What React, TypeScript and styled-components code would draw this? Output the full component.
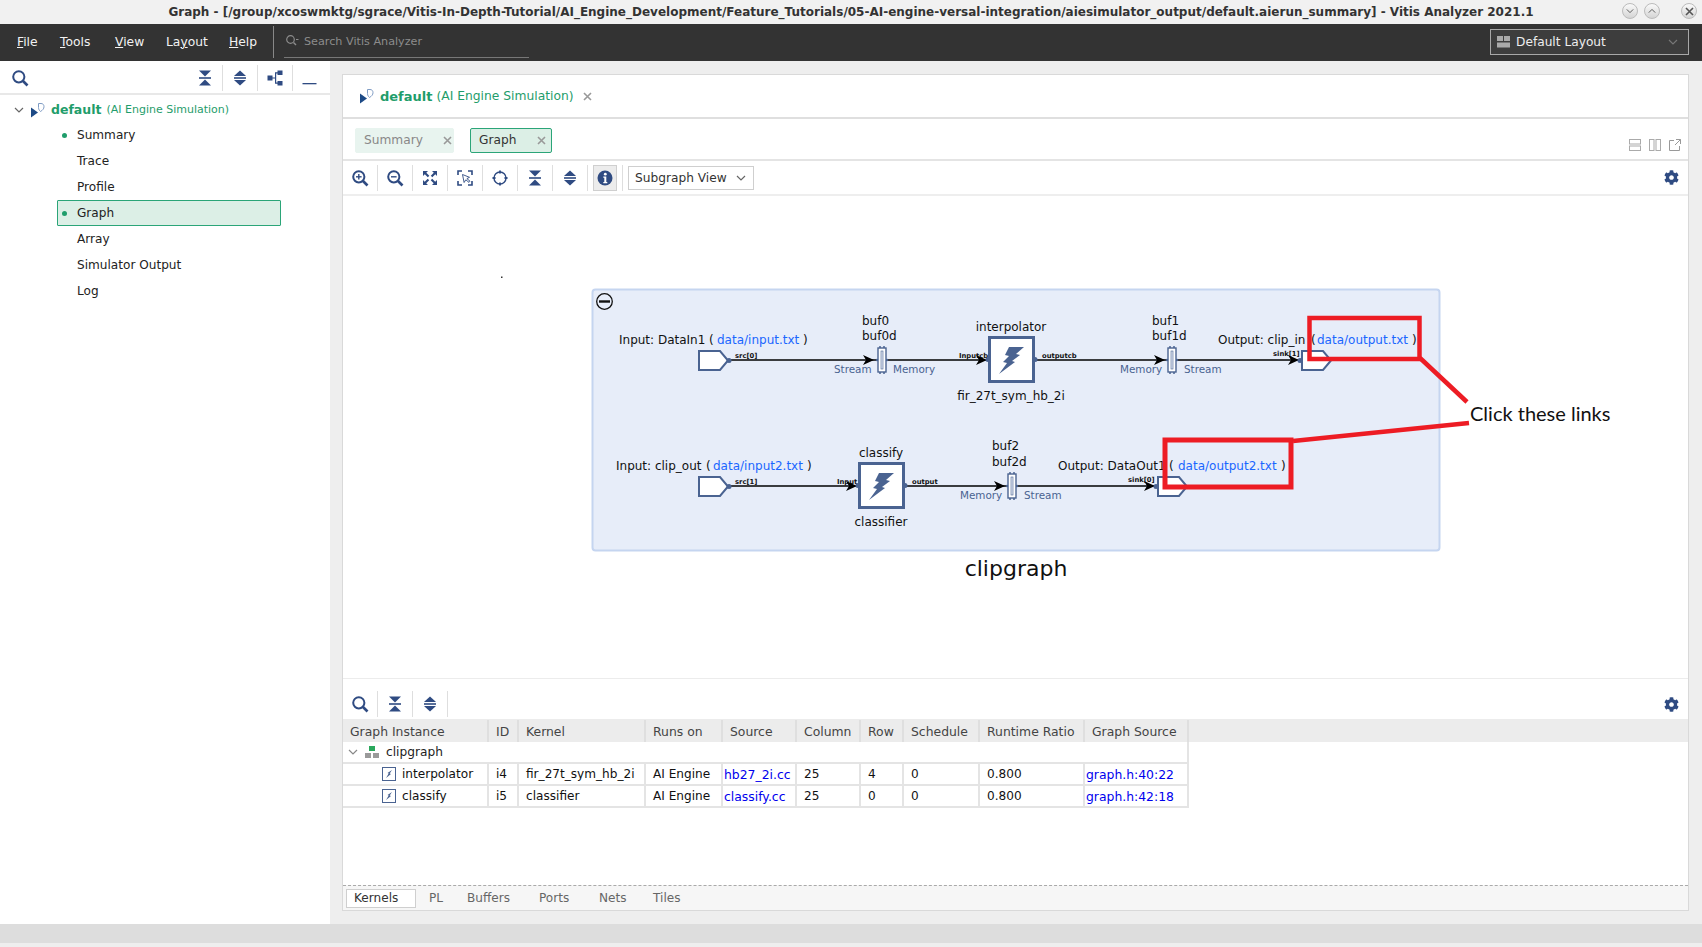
import React from 'react';
import styled, { createGlobalStyle } from 'styled-components';
import { FaCog } from 'react-icons/fa';

const NAVY = '#2f4b82';
const NODE = '#4a6391';
const GREEN = '#1f9d6b';
const UI_FONT = '"DejaVu Sans", sans-serif';

const Global = createGlobalStyle`
  html, body { margin: 0; padding: 0; background: #eeeeee; }
  body { font-family: ${UI_FONT}; font-size: 12px; color: #222; }
`;

const Page = styled.div`
  width: 1702px;
  height: 947px;
  display: flex;
  flex-direction: column;
  overflow: hidden;
  background: #eeeeee;
`;

const TitleBar = styled.div`
  height: 23px;
  padding-bottom: 1px;
  flex: none;
  display: flex;
  align-items: center;
  justify-content: center;
  background: #f1f1f1;
  position: relative;
  font-weight: bold;
  font-size: 12px;
  color: #333;
`;

const WindowButtons = styled.div`
  position: absolute;
  right: 5px;
  top: 3px;
  display: flex;
`;

const WindowButton = styled.div<{ $gap?: number }>`
  width: 16px;
  height: 16px;
  border-radius: 50%;
  margin-left: ${p => p.$gap ?? 0}px;
  background: linear-gradient(#fafafa, #d4d4d4);
  border: 1px solid #bbb;
  box-sizing: border-box;
  display: flex;
  align-items: center;
  justify-content: center;
`;

const MenuBar = styled.div`
  height: 35px;
  padding-bottom: 2px;
  flex: none;
  display: flex;
  align-items: center;
  background: #333333;
  color: #f2f2f2;
  padding-left: 17px;
`;

const MenuItem = styled.span<{ $w: number }>`
  width: ${p => p.$w}px;
  font-size: 12.3px;
`;

const MenuDivider = styled.div`
  width: 1px;
  height: 32px;
  background: #888;
  margin-left: 7px;
`;

const SearchBox = styled.div`
  width: 244px;
  height: 32px;
  margin-left: 10px;
  border-bottom: 1px solid #777;
  display: flex;
  align-items: center;
  gap: 5px;
  color: #8c8c8c;
  font-size: 11.2px;
  box-sizing: content-box;
  padding-left: 1px;
`;

const LayoutSelect = styled.div`
  width: 199px;
  height: 26px;
  margin-left: auto;
  margin-right: 13px;
  box-sizing: border-box;
  border: 1px solid #a8a8a8;
  background: #3d3d3d;
  display: flex;
  align-items: center;
  padding: 0 10px 0 6px;
  gap: 6px;
  font-size: 12.2px;
  color: #eee;
`;

const LayoutIcon = styled.svg`
  width: 13px;
  height: 12px;
`;

const Body = styled.div`
  flex: 1;
  display: flex;
  min-height: 0;
`;

const Sidebar = styled.aside`
  width: 330px;
  flex: none;
  background: #fff;
`;

const SideToolbar = styled.div`
  height: 30px;
  padding-top: 2px;
  display: flex;
  align-items: center;
  border-bottom: 2px solid #e8e8e8;
  padding-left: 11px;
`;

const Tree = styled.div`
  display: flex;
  flex-direction: column;
  padding-top: 2px;
`;

const TreeRoot = styled.div`
  height: 25px;
  display: flex;
  align-items: center;
  padding-left: 14px;
`;

const RootName = styled.span<{ $size?: number }>`
  color: ${GREEN};
  font-weight: bold;
  font-size: ${p => p.$size ?? 13}px;
  margin-left: 5px;
`;

const RootNote = styled.span<{ $size?: number; $gap?: number }>`
  color: ${GREEN};
  font-size: ${p => p.$size ?? 11}px;
  margin-left: ${p => p.$gap ?? 4}px;
`;

const TreeItem = styled.div<{ $active?: boolean }>`
  width: 224px;
  height: 26px;
  margin-left: 57px;
  box-sizing: border-box;
  display: flex;
  align-items: center;
  padding-left: 4px;
  font-size: 12.1px;
  border: 1px solid ${p => (p.$active ? '#2ba578' : 'transparent')};
  background: ${p => (p.$active ? '#dcefe6' : 'transparent')};
  border-radius: 1px;
`;

const Dot = styled.span<{ $on?: boolean }>`
  width: 5px;
  height: 5px;
  border-radius: 50%;
  margin-right: 10px;
  background: ${p => (p.$on ? GREEN : 'transparent')};
`;

const Main = styled.main`
  flex: 1;
  padding: 13px 13px 13px 12px;
  min-width: 0;
  display: flex;
`;

const Panel = styled.section`
  flex: 1;
  background: #fff;
  border: 1px solid #d9d9d9;
  display: flex;
  flex-direction: column;
  min-width: 0;
`;

const PanelHeader = styled.div`
  height: 42px;
  flex: none;
  display: flex;
  align-items: center;
  padding-left: 16px;
  border-bottom: 2px solid #dfdfdf;
`;

const CloseMark = styled.svg<{ $left?: number }>`
  width: 9px;
  height: 9px;
  margin-left: ${p => p.$left ?? 0}px;
  flex: none;
`;

const TabRow = styled.div`
  height: 38px;
  padding-top: 2px;
  flex: none;
  display: flex;
  align-items: center;
  padding-left: 12px;
  gap: 16px;
  border-bottom: 2px solid #e4e4e4;
`;

const Tab = styled.div<{ $active?: boolean; $w: number; $pr: number }>`
  width: ${p => p.$w}px;
  height: 25px;
  box-sizing: border-box;
  display: flex;
  align-items: center;
  justify-content: space-between;
  padding: 0 ${p => p.$pr}px 0 8px;
  border-radius: 2px;
  font-size: 12.2px;
  background: ${p => (p.$active ? '#dcefe6' : '#e8f4ef')};
  border: 1px solid ${p => (p.$active ? '#2ba578' : '#e8f4ef')};
  color: ${p => (p.$active ? '#333' : '#888')};
`;

const ViewActions = styled.div`
  margin-left: auto;
  margin-right: 7px;
  margin-top: 9px;
  display: flex;
  gap: 8px;
`;

const Toolbar = styled.div<{ $h: number; $rule?: boolean; $top?: number }>`
  height: ${p => p.$h}px;
  padding-top: ${p => p.$top ?? 0}px;
  flex: none;
  display: flex;
  align-items: center;
  border-bottom: ${p => (p.$rule ? '2px solid #eeeeee' : 'none')};
`;

const ToolButton = styled.div<{ $w?: number; $plain?: boolean }>`
  width: ${p => p.$w ?? 35}px;
  height: 26px;
  flex: none;
  display: flex;
  align-items: center;
  justify-content: ${p => (p.$w ? 'flex-start' : 'center')};
  box-sizing: border-box;
  border-right: ${p => (p.$plain ? 'none' : '1px solid #dedede')};
`;

const PressedBox = styled.div`
  width: 24px;
  height: 26px;
  box-sizing: border-box;
  background: #ececec;
  border: 1px solid #cfcfcf;
  display: flex;
  align-items: center;
  justify-content: center;
`;

const ViewSelect = styled.div`
  width: 126px;
  height: 24px;
  box-sizing: border-box;
  margin-left: 5px;
  border: 1px solid #cfcfcf;
  display: flex;
  align-items: center;
  justify-content: space-between;
  padding: 0 7px 0 6px;
  font-size: 12.2px;
  color: #333;
`;

const GearSlot = styled.div`
  margin-left: auto;
  margin-right: 9px;
  display: flex;
  color: ${NAVY};
`;

const Canvas = styled.div`
  flex: none;
  height: 482px;
  border-bottom: 1px solid #ececec;
`;

const Diagram = styled.svg`
  display: block;
  width: 1346px;
  height: 482px;
`;

const Label = styled.text<{ $size?: number; $color?: string; $bold?: boolean; $mid?: boolean; $font?: string }>`
  font-family: ${p => p.$font ?? UI_FONT};
  font-size: ${p => p.$size ?? 12}px;
  fill: ${p => p.$color ?? '#111'};
  font-weight: ${p => (p.$bold ? 'bold' : 'normal')};
  text-anchor: ${p => (p.$mid ? 'middle' : 'start')};
`;

const TableArea = styled.div`
  flex: 1;
  display: flex;
  flex-direction: column;
  min-height: 0;
`;

const COLS = '146px 30px 127px 77px 74px 64px 43px 76px 105px 104px';

const HeadRow = styled.div`
  height: 23px;
  flex: none;
  display: grid;
  grid-template-columns: ${COLS};
  background: #ececec;
  color: #444;
`;

const HeadCell = styled.div`
  display: flex;
  align-items: center;
  padding-left: 7px;
  font-size: 12.4px;
  border-right: 2px solid #dfdfdf;
  margin-top: 1px;
  box-sizing: border-box;
  white-space: nowrap;
`;

const GroupRow = styled.div`
  width: 846px;
  height: 22px;
  flex: none;
  display: flex;
  align-items: center;
  box-sizing: border-box;
  border-right: 2px solid #e4e4e4;
  border-bottom: 2px solid #e4e4e4;
  padding-left: 5px;
  font-size: 12.2px;
`;

const DataRow = styled.div`
  height: 22px;
  flex: none;
  display: grid;
  grid-template-columns: ${COLS};
  width: 846px;
  box-sizing: border-box;
  border-bottom: 2px solid #e4e4e4;
`;

const Cell = styled.div<{ $link?: boolean; $indent?: number }>`
  display: flex;
  align-items: center;
  box-sizing: border-box;
  border-right: 2px solid #e4e4e4;
  padding-left: ${p => p.$indent ?? 7}px;
  padding-top: ${p => (p.$link ? 1 : 0)}px;
  font-size: ${p => (p.$link ? 12.4 : 12.1)}px;
  white-space: nowrap;
  color: ${p => (p.$link ? '#0000ee' : '#111')};
`;

const Spacer = styled.div`
  flex: 1;
`;

const BottomTabs = styled.div`
  height: 24px;
  flex: none;
  display: flex;
  align-items: center;
  padding-left: 3px;
  background: #f6f6f6;
  border-top: 1px dashed #aaa;
  font-size: 12.1px;
  color: #666;
`;

const BottomTab = styled.div<{ $active?: boolean; $w: number }>`
  width: ${p => p.$w}px;
  height: 19px;
  box-sizing: border-box;
  display: flex;
  align-items: center;
  padding-left: ${p => (p.$active ? 7 : 0)}px;
  margin-right: ${p => (p.$active ? 13 : 0)}px;
  background: ${p => (p.$active ? '#fff' : 'transparent')};
  border: ${p => (p.$active ? '1px solid #cfcfcf' : 'none')};
  color: ${p => (p.$active ? '#333' : '#666')};
`;

const StatusBar = styled.div`
  height: 19px;
  flex: none;
  background: #dddddd;
  margin-bottom: 4px;
`;

const ChevronEnd = styled.span`
  margin-left: auto;
  display: flex;
`;

const RootGap = styled.span`
  width: 6px;
`;

/* icons */

const Icon = styled.svg`
  width: 18px;
  height: 18px;
  flex: none;
  display: block;
`;

const SearchIcon = ({ plus, minus }: { plus?: boolean; minus?: boolean }) => (
  <Icon viewBox="0 0 18 18" fill="none" stroke={NAVY}>
    <circle cx="7.8" cy="7.8" r="5.6" strokeWidth="2" />
    <path d="M12 12l4.5 4.5" strokeWidth="2.6" />
    {(plus || minus) && <path d="M5 7.8h5.6" strokeWidth="1.4" />}
    {plus && <path d="M7.8 5v5.6" strokeWidth="1.4" />}
  </Icon>
);

const CollapseIcon = () => (
  <Icon viewBox="0 0 18 18" fill={NAVY}>
    <path d="M3 1.5h12L9 7.5z" />
    <rect x="3" y="8.2" width="12" height="1.6" />
    <path d="M3 16.5h12L9 10.5z" />
  </Icon>
);

const ExpandIcon = () => (
  <Icon viewBox="0 0 18 18" fill={NAVY}>
    <path d="M9 1.5l6 5.5H3z" />
    <rect x="3" y="8.2" width="12" height="1.6" />
    <path d="M9 16.5l6-5.5H3z" />
  </Icon>
);

const HierarchyIcon = () => (
  <Icon viewBox="0 0 18 18" fill={NAVY}>
    <rect x="1.5" y="6.5" width="5" height="5" />
    <rect x="11.5" y="1.5" width="5" height="4.5" />
    <rect x="11.5" y="12" width="5" height="4.5" />
    <path d="M6 8.5h3V3.2h3v1.2H10.2v4.1h0v1h0V13.6H12v1.2H9V9.6H6z" />
  </Icon>
);

const MinimizeIcon = () => (
  <Icon viewBox="0 0 18 18">
    <rect x="0.5" y="14" width="14" height="1.3" fill={NAVY} />
  </Icon>
);

const FitIcon = () => (
  <Icon viewBox="0 0 18 18" fill={NAVY}>
    <path d="M2 2h5L5.3 3.7l3 3-1.5 1.5-3-3L2 7zM16 2v5l-1.7-1.7-3 3-1.5-1.5 3-3L11 2zM2 16v-5l1.7 1.7 3-3 1.5 1.5-3 3L7 16zM16 16h-5l1.7-1.7-3-3 1.5-1.5 3 3L16 11z" />
  </Icon>
);

const SelectZoomIcon = () => (
  <Icon viewBox="0 0 18 18" fill="none" stroke={NAVY} strokeWidth="1.6">
    <path d="M2 6V2h4M12 2h4v4M2 12v4h4M12 16h4v-4" />
    <path d="M6.5 5.5l1.6 8 1.7-2.7 3.2 2.6 1-1.2-3.1-2.6 2.6-1.3z" strokeWidth="0.9" />
  </Icon>
);

const TargetIcon = () => (
  <Icon viewBox="0 0 18 18" fill="none" stroke={NAVY}>
    <circle cx="9" cy="9" r="6" strokeWidth="1.4" />
    <path d="M9 1.5v3M9 13.5v3M1.5 9h3M13.5 9h3" strokeWidth="1.8" />
  </Icon>
);

const InfoIcon = () => (
  <Icon viewBox="0 0 18 18">
    <circle cx="9" cy="9" r="7.5" fill={NAVY} />
    <circle cx="9.3" cy="5.2" r="1.4" fill="#fff" />
    <path d="M7.3 7.6h3v5.4h1v1.2H7.3V13h1v-4.2h-1z" fill="#fff" />
  </Icon>
);

const Cross = ({ left, color = '#999' }: { left?: number; color?: string }) => (
  <CloseMark $left={left} viewBox="0 0 9 9">
    <path d="M1 1l7 7M8 1L1 8" stroke={color} strokeWidth="1.6" fill="none" />
  </CloseMark>
);

const Chevron = ({ color = '#666', size = 10, up }: { color?: string; size?: number; up?: boolean }) => (
  <svg width={size} height={size} viewBox="0 0 10 10">
    <path d={up ? 'M1 7l4-4 4 4' : 'M1 3l4 4 4-4'} stroke={color} strokeWidth="1.2" fill="none" />
  </svg>
);

const RunIcon = () => (
  <svg width="16" height="16" viewBox="0 0 16 16">
    <path d="M1 5.5l7 5-7 5z" fill="#1d4a86" />
    <path d="M8.5 1.5h2.5c2 0 3 1.4 3 3.2 0 2-1.5 3.6-3.5 4.8-1-1-2-2-2-4z" fill="#fff" stroke="#7f9cc4" strokeWidth="1" />
  </svg>
);

const GlyphSvg = styled.svg`
  flex: none;
  margin: 0 6px 0 7px;
`;

const GraphGlyph = () => (
  <GlyphSvg width="15" height="12" viewBox="0 0 15 12">
    <rect x="4" y="0" width="6" height="5" fill="#2aa85c" />
    <rect x="0" y="7" width="6" height="5" fill="#9a9a9a" />
    <rect x="8" y="7" width="6" height="5" fill="#9a9a9a" />
  </GlyphSvg>
);

const KernelGlyph = styled.div`
  width: 14px;
  height: 14px;
  flex: none;
  box-sizing: border-box;
  border: 1px solid ${NODE};
  margin-right: 6px;
  display: flex;
  align-items: center;
  justify-content: center;
`;

const KernelBolt = () => (
  <KernelGlyph>
    <svg width="10" height="10" viewBox="0 0 10 10">
      <path d="M8 1L3.5 4l1.2.4L2 9l5-4-1.3-.4z" fill={NODE} />
    </svg>
  </KernelGlyph>
);

/* diagram parts */

const Bolt = ({ x, y }: { x: number; y: number }) => (
  <path
    transform={`translate(${x} ${y})`}
    d="M12 8H27L19 15L23 16L15 22L18 23L2 35L10 24L6 23L12 17L8 16z"
    fill={NODE}
  />
);

const Block = ({ x, y }: { x: number; y: number }) => (
  <g>
    <rect x={x + 1.5} y={y + 1.5} width="44" height="44" fill="#fff" stroke={NODE} strokeWidth="3" />
    <Bolt x={x + 9} y={y + 3} />
    <circle cx={x} cy={y + 23.5} r="2.5" fill={NODE} />
    <circle cx={x + 47} cy={y + 23.5} r="2.5" fill={NODE} />
  </g>
);

const BufferShape = ({ x, y }: { x: number; y: number }) => (
  <g>
    <rect x={x + 1} y={y + 2} width="8" height="24" fill="#fff" stroke={NODE} strokeWidth="1.4" />
    <rect x={x + 4} y={y + 5} width="2" height="18" fill="#dfe6f3" stroke={NODE} strokeWidth="0.6" />
    <path d={`M${x + 2} ${y + 1}h2M${x + 6} ${y + 1}h2M${x + 2} ${y + 27}h2M${x + 6} ${y + 27}h2`} stroke={NODE} strokeWidth="1.4" />
    <circle cx={x} cy={y + 14} r="1.2" fill={NODE} />
    <circle cx={x + 10} cy={y + 14} r="1.2" fill={NODE} />
  </g>
);

const Arrow = ({ x, y }: { x: number; y: number }) => (
  <path d={`M${x} ${y}l-11 -5 3 5 -3 5z`} fill="#000" />
);

const Pentagon = ({ x, y, outward }: { x: number; y: number; outward?: boolean }) => (
  <g>
    <path
      d={`M${x + 1} ${y + 1}h21l8 9.5-8 9.5h-21z`}
      fill="#fff"
      stroke={NODE}
      strokeWidth="2"
    />
    <circle cx={outward ? x + 31 : x - 1} cy={y + 10.5} r="2.5" fill={NODE} />
  </g>
);

const RED = '#ed1c24';
const LINK = '#1a66ff';

const GraphDiagram = () => (
  <Diagram viewBox="343 196 1346 482">
    <rect x="501" y="276.5" width="1.5" height="1.5" fill="#333" />
    <rect x="592.5" y="289.5" width="847" height="261" rx="3" fill="#e7edf9" stroke="#c5d5f0" strokeWidth="2" />
    <circle cx="604.5" cy="301.5" r="7.8" fill="none" stroke="#111" strokeWidth="1.3" />
    <rect x="599" y="300.3" width="11" height="2.4" fill="#111" />

    <path d="M729 360H1300" stroke="#000" strokeWidth="1.3" />
    <path d="M729 486H1155" stroke="#000" strokeWidth="1.3" />

    <Label x="619" y="344">Input: DataIn1</Label>
    <Label x="709" y="344">(</Label>
    <Label x="717" y="344" $color={LINK}>data/input.txt</Label>
    <Label x="803" y="344">)</Label>
    <Pentagon x={698} y={350} outward />
    <Label x="735" y="358" $size={6.8} $bold>src[0]</Label>
    <Arrow x={874} y={360} />
    <BufferShape x={877} y={346} />
    <Label x="862" y="325">buf0</Label>
    <Label x="862" y="340">buf0d</Label>
    <Label x="834" y="373" $size={10.4} $color={NODE}>Stream</Label>
    <Label x="893" y="373" $size={10.4} $color={NODE}>Memory</Label>
    <Label x="959" y="358" $size={6.8} $bold>Inputcb</Label>
    <Arrow x={987} y={360} />
    <Block x={988} y={336} />
    <Label x="1011" y="331" $mid>interpolator</Label>
    <Label x="1011" y="400" $mid>fir_27t_sym_hb_2i</Label>
    <Label x="1042" y="358" $size={6.8} $bold>outputcb</Label>
    <Arrow x={1165} y={360} />
    <BufferShape x={1167} y={346} />
    <Label x="1152" y="325">buf1</Label>
    <Label x="1152" y="340">buf1d</Label>
    <Label x="1120" y="373" $size={10.4} $color={NODE}>Memory</Label>
    <Label x="1184" y="373" $size={10.4} $color={NODE}>Stream</Label>
    <Label x="1218" y="344">Output: clip_in</Label>
    <Label x="1311" y="344">(</Label>
    <Label x="1317" y="344" $color={LINK}>data/output.txt</Label>
    <Label x="1412" y="344">)</Label>
    <Label x="1273" y="356" $size={6.8} $bold>sink[1]</Label>
    <Arrow x={1299} y={360} />
    <Pentagon x={1301} y={350} />

    <Label x="616" y="470">Input: clip_out</Label>
    <Label x="706" y="470">(</Label>
    <Label x="713" y="470" $color={LINK}>data/input2.txt</Label>
    <Label x="807" y="470">)</Label>
    <Pentagon x={698} y={476} outward />
    <Label x="735" y="484" $size={6.8} $bold>src[1]</Label>
    <Label x="837" y="484" $size={6.8} $bold>Input</Label>
    <Arrow x={857} y={486} />
    <Block x={858} y={462} />
    <Label x="881" y="457" $mid>classify</Label>
    <Label x="881" y="526" $mid>classifier</Label>
    <Label x="912" y="484" $size={6.8} $bold>output</Label>
    <Arrow x={1005} y={486} />
    <BufferShape x={1007} y={472} />
    <Label x="992" y="450">buf2</Label>
    <Label x="992" y="466">buf2d</Label>
    <Label x="960" y="499" $size={10.4} $color={NODE}>Memory</Label>
    <Label x="1024" y="499" $size={10.4} $color={NODE}>Stream</Label>
    <Label x="1058" y="470">Output: DataOut1</Label>
    <Label x="1169" y="470">(</Label>
    <Label x="1178" y="470" $color={LINK}>data/output2.txt</Label>
    <Label x="1281" y="470">)</Label>
    <Label x="1128" y="482" $size={6.8} $bold>sink[0]</Label>
    <Arrow x={1155} y={486} />
    <Pentagon x={1157} y={476} />

    <Label x="1016" y="576" $size={22} $mid>clipgraph</Label>

    <rect x="1309.5" y="318" width="110" height="41" fill="none" stroke={RED} strokeWidth="4.5" />
    <rect x="1165" y="440" width="126" height="47" fill="none" stroke={RED} strokeWidth="5" />
    <path d="M1420 358L1467 402" stroke={RED} strokeWidth="4.5" fill="none" />
    <path d="M1293 441L1469 423" stroke={RED} strokeWidth="4.5" fill="none" />
    <Label x="1470" y="421" $size={20} $font="Lato, sans-serif">Click these links</Label>
  </Diagram>
);

const kernels = [
  { name: 'interpolator', id: 'i4', kernel: 'fir_27t_sym_hb_2i', source: 'hb27_2i.cc', row: '4', graph: 'graph.h:40:22' },
  { name: 'classify', id: 'i5', kernel: 'classifier', source: 'classify.cc', row: '0', graph: 'graph.h:42:18' },
];

const headers = ['Graph Instance', 'ID', 'Kernel', 'Runs on', 'Source', 'Column', 'Row', 'Schedule', 'Runtime Ratio', 'Graph Source'];

const treeItems = [
  { label: 'Summary', dot: true },
  { label: 'Trace' },
  { label: 'Profile' },
  { label: 'Graph', dot: true, active: true },
  { label: 'Array' },
  { label: 'Simulator Output' },
  { label: 'Log' },
];

const App = () => (
  <Page>
    <Global />
    <TitleBar>
      Graph - [/group/xcoswmktg/sgrace/Vitis-In-Depth-Tutorial/AI_Engine_Development/Feature_Tutorials/05-AI-engine-versal-integration/aiesimulator_output/default.aierun_summary] - Vitis Analyzer 2021.1
      <WindowButtons>
        <WindowButton><Chevron size={8} color="#555" /></WindowButton>
        <WindowButton $gap={6}><Chevron size={8} color="#555" up /></WindowButton>
        <WindowButton $gap={21}><Cross color="#555" /></WindowButton>
      </WindowButtons>
    </TitleBar>

    <MenuBar>
      <MenuItem $w={43}><u>F</u>ile</MenuItem>
      <MenuItem $w={55}><u>T</u>ools</MenuItem>
      <MenuItem $w={51}><u>V</u>iew</MenuItem>
      <MenuItem $w={63}>La<u>y</u>out</MenuItem>
      <MenuItem $w={37}><u>H</u>elp</MenuItem>
      <MenuDivider />
      <SearchBox>
        <svg width="14" height="14" viewBox="0 0 14 14" fill="none" stroke="#8c8c8c">
          <circle cx="5.5" cy="5.5" r="3.8" strokeWidth="1.2" />
          <path d="M8.5 8.5l2.5 2.5" strokeWidth="1.4" />
          <path d="M11 5.5h2.5" strokeWidth="1" />
        </svg>
        Search Vitis Analyzer
      </SearchBox>
      <LayoutSelect>
        <LayoutIcon viewBox="0 0 13 12" fill="#a9a9a9">
          <rect x="0" y="0" width="6" height="5" />
          <rect x="7" y="0" width="6" height="5" />
          <rect x="0" y="6.5" width="13" height="5" />
        </LayoutIcon>
        Default Layout
        <ChevronEnd><Chevron color="#777" /></ChevronEnd>
      </LayoutSelect>
    </MenuBar>

    <Body>
      <Sidebar>
        <SideToolbar>
          <ToolButton $w={177} $plain><SearchIcon /></ToolButton>
          <ToolButton><CollapseIcon /></ToolButton>
          <ToolButton><ExpandIcon /></ToolButton>
          <ToolButton><HierarchyIcon /></ToolButton>
          <ToolButton $plain><MinimizeIcon /></ToolButton>
        </SideToolbar>
        <Tree>
          <TreeRoot>
            <Chevron />
            <RootGap />
            <RunIcon />
            <RootName $size={12.5}>default</RootName>
            <RootNote $size={11} $gap={5}>(AI Engine Simulation)</RootNote>
          </TreeRoot>
          {treeItems.map(t => (
            <TreeItem key={t.label} $active={t.active}>
              <Dot $on={t.dot} />
              {t.label}
            </TreeItem>
          ))}
        </Tree>
      </Sidebar>

      <Main>
        <Panel>
          <PanelHeader>
            <RunIcon />
            <RootName>default</RootName>
            <RootNote $size={12.3} $gap={4}>(AI Engine Simulation)</RootNote>
            <Cross left={9} />
          </PanelHeader>

          <TabRow>
            <Tab $w={99} $pr={1}>Summary<Cross /></Tab>
            <Tab $w={82} $pr={5} $active>Graph<Cross /></Tab>
            <ViewActions>
              <svg width="12" height="12" viewBox="0 0 12 12" fill="none" stroke="#aaa"><rect x="0.5" y="0.5" width="11" height="4.5" /><rect x="0.5" y="7" width="11" height="4.5" /></svg>
              <svg width="12" height="12" viewBox="0 0 12 12" fill="none" stroke="#aaa"><rect x="0.5" y="0.5" width="4.5" height="11" /><rect x="7" y="0.5" width="4.5" height="11" /></svg>
              <svg width="12" height="12" viewBox="0 0 12 12" fill="none" stroke="#999"><path d="M5 1.5H.5v10h10V7M7 .5h4.5V5M11.5 .5L6 6" /></svg>
            </ViewActions>
          </TabRow>

          <Toolbar $h={33} $rule>
            <ToolButton><SearchIcon plus /></ToolButton>
            <ToolButton><SearchIcon minus /></ToolButton>
            <ToolButton><FitIcon /></ToolButton>
            <ToolButton><SelectZoomIcon /></ToolButton>
            <ToolButton><TargetIcon /></ToolButton>
            <ToolButton><CollapseIcon /></ToolButton>
            <ToolButton><ExpandIcon /></ToolButton>
            <ToolButton><PressedBox><InfoIcon /></PressedBox></ToolButton>
            <ViewSelect>Subgraph View<Chevron /></ViewSelect>
            <GearSlot><FaCog size={15} /></GearSlot>
          </Toolbar>

          <Canvas><GraphDiagram /></Canvas>

          <TableArea>
            <Toolbar $h={30} $top={10}>
              <ToolButton><SearchIcon /></ToolButton>
              <ToolButton><CollapseIcon /></ToolButton>
              <ToolButton><ExpandIcon /></ToolButton>
              <GearSlot><FaCog size={15} /></GearSlot>
            </Toolbar>
            <HeadRow>
              {headers.map(h => <HeadCell key={h}>{h}</HeadCell>)}
            </HeadRow>
            <GroupRow>
              <Chevron color="#888" />
              <GraphGlyph />
              clipgraph
            </GroupRow>
            {kernels.map(k => (
              <DataRow key={k.name}>
                <Cell $indent={39}><KernelBolt />{k.name}</Cell>
                <Cell>{k.id}</Cell>
                <Cell>{k.kernel}</Cell>
                <Cell>AI Engine</Cell>
                <Cell $link $indent={1}>{k.source}</Cell>
                <Cell>25</Cell>
                <Cell>{k.row}</Cell>
                <Cell>0</Cell>
                <Cell>0.800</Cell>
                <Cell $link $indent={1}>{k.graph}</Cell>
              </DataRow>
            ))}
            <Spacer />
            <BottomTabs>
              <BottomTab $active $w={70}>Kernels</BottomTab>
              <BottomTab $w={38}>PL</BottomTab>
              <BottomTab $w={72}>Buffers</BottomTab>
              <BottomTab $w={60}>Ports</BottomTab>
              <BottomTab $w={54}>Nets</BottomTab>
              <BottomTab $w={40}>Tiles</BottomTab>
            </BottomTabs>
          </TableArea>
        </Panel>
      </Main>
    </Body>
    <StatusBar />
  </Page>
);

export default App;
